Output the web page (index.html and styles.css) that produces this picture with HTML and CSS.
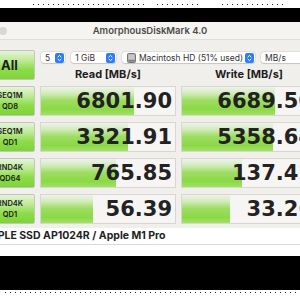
FILE: index.html
```html
<!DOCTYPE html>
<html lang="en">
<head>
    <meta charset="utf-8">
    <title>AmorphousDiskMark 4.0</title>
    <link rel="stylesheet" href="styles.css">
</head>
<body>
    <!-- top edge of the screen -->
    <div class="dots top">
        <span class="run r1"></span><span class="run r2"></span><span class="run r3"></span>
    </div>
    <div class="band"></div>

    <div class="window">
        <div class="titlebar">
            <span class="light"></span>
            <span class="title">AmorphousDiskMark 4.0</span>
        </div>

        <div class="main">
            <button class="btn all">All</button>

            <div class="toolbar">
                <div class="select s-count"><span>5</span>
                    <svg class="step" width="9" height="10" viewBox="0 0 9 10"><rect width="9" height="10" rx="2" fill="#2f7df6"/><path d="M2.7 4.1 4.5 2.4 6.3 4.1M2.7 5.9 4.5 7.6 6.3 5.9" fill="none" stroke="#fff" stroke-width="1"/></svg>
                </div>
                <div class="select s-size"><span>1 GiB</span>
                    <svg class="step" width="9" height="10" viewBox="0 0 9 10"><rect width="9" height="10" rx="2" fill="#2f7df6"/><path d="M2.7 4.1 4.5 2.4 6.3 4.1M2.7 5.9 4.5 7.6 6.3 5.9" fill="none" stroke="#fff" stroke-width="1"/></svg>
                </div>
                <div class="select s-disk">
                    <svg class="disk" width="9" height="10" viewBox="0 0 9 10"><rect x="0.5" y="0.5" width="8" height="9" rx="1" fill="#a9a9a9" stroke="#777"/><rect x="1.5" y="1.5" width="6" height="5" fill="#c8c8c8"/><path d="M1.5 7.8H7.5" stroke="#666"/></svg>
                    <span>Macintosh HD (51% used)</span>
                    <svg class="step" width="9" height="10" viewBox="0 0 9 10"><rect width="9" height="10" rx="2" fill="#2f7df6"/><path d="M2.7 4.1 4.5 2.4 6.3 4.1M2.7 5.9 4.5 7.6 6.3 5.9" fill="none" stroke="#fff" stroke-width="1"/></svg>
                </div>
                <div class="select s-unit"><span>MB/s</span></div>
            </div>

            <div class="head">Read [MB/s]</div>
            <div class="head">Write [MB/s]</div>

            <!-- SEQ1M QD8 -->
            <button class="btn label">SEQ1M<br>QD8</button>
            <div class="cell" style="--w: 69.6%">6801.90</div>
            <div class="cell" style="--w: 69.6%">6689.50</div>

            <!-- SEQ1M QD1 -->
            <button class="btn label">SEQ1M<br>QD1</button>
            <div class="cell" style="--w: 65%">3321.91</div>
            <div class="cell" style="--w: 68%">5358.64</div>

            <!-- RND4K QD64 -->
            <button class="btn label">RND4K<br>QD64</button>
            <div class="cell" style="--w: 56%">765.85</div>
            <div class="cell" style="--w: 44.8%">137.42</div>

            <!-- RND4K QD1 -->
            <button class="btn label">RND4K<br>QD1</button>
            <div class="cell" style="--w: 39%">56.39</div>
            <div class="cell" style="--w: 36%">33.26</div>
        </div>

        <div class="footer">APPLE SSD AP1024R / Apple M1 Pro</div>
    </div>

    <div class="band low"></div>
    <div class="dots bottom">
        <span class="run r4"></span>
    </div>
</body>
</html>
```

FILE: styles.css
```css
body {
    margin: 0;
    width: 300px;
    height: 300px;
    overflow: hidden;
    background: #fff;
    font-family: Inter, "Noto Sans", sans-serif;
    color: #222;
}

/* dotted menu-bar edge */
.dots {
    height: 8px;
    display: flex;
    align-items: flex-start;
}
.dots.top {
    padding-top: 4px;
    height: 4px;
}
.dots.bottom {
    height: 10px;
    padding-top: 2px;
}
.run {
    display: block;
    height: 1px;
    background: repeating-linear-gradient(to right, #222 0 1px, transparent 1px 5px);
}
.r1 { margin-left: 33px; width: 115px; }
.r2 { margin-left: 9px; width: 42px; }
.r3 { margin-left: 23px; width: 65px; }
.r4 { margin-left: 5px; width: 295px; }

.band {
    height: 14px;
    background: #000;
}
.band.low {
    height: 34px;
}

/* window */
.window {
    width: 330px;
    margin-left: -15px;
    background: #f1efec;
}

.titlebar {
    height: 17px;
    border-bottom: 1px solid #e1deda;
    background: #f6f4f1;
    display: flex;
    align-items: center;
    position: relative;
}
.light {
    width: 8px;
    height: 8px;
    margin-left: 14px;
    border-radius: 50%;
    background: #d9d7d4;
}
.title {
    position: absolute;
    left: 0;
    right: 0;
    text-align: center;
    font-size: 9.5px;
    font-weight: 600;
    color: #4b4b4b;
}

.main {
    display: grid;
    grid-template-columns: 50px 136px 136px;
    grid-template-rows: 13px 11px repeat(4, 30px);
    column-gap: 5px;
    row-gap: 6px;
    padding-top: 10px;
}

/* green buttons */
.btn {
    margin: 0;
    padding: 0 0 0 0;
    border: 1px solid #c4c4c0;
    border-radius: 2px;
    background: linear-gradient(#e6f4da 0%, #c2eb9c 30%, #8edc4b 65%, #7dd535 100%);
    color: #1c1c1c;
    font-family: Inter, "Noto Sans", sans-serif;
    text-align: center;
}
.btn.all {
    grid-row: span 2;
    padding-left: 0;
    font-size: 13px;
    font-weight: 700;
    text-indent: -1px;
}
.btn.label {
    font-size: 7.5px;
    font-weight: 600;
    line-height: 11.5px;
    padding-left: 0;
}

.toolbar {
    grid-column: 2 / 4;
    display: flex;
    gap: 6px;
    padding-left: 1px;
    padding-top: 2px;
}
.select {
    height: 11px;
    display: flex;
    align-items: center;
    background: #fff;
    border-radius: 3px;
    box-shadow: 0 0 0 0.5px rgba(0, 0, 0, 0.12), 0 0.5px 1px rgba(0, 0, 0, 0.12);
    font-size: 8.5px;
    color: #333;
}
.select span {
    flex: 1;
    padding-left: 4px;
}
.step {
    flex: none;
    margin-right: 1px;
}
.s-count { width: 26px; }
.s-size { width: 48px; }
.s-disk { width: 143px; }
.s-disk .disk {
    flex: none;
    margin-left: 5px;
}
.s-disk span { padding-left: 3px; }
.s-unit { width: 60px; }

.head {
    text-align: center;
    font-size: 11px;
    font-weight: 700;
    line-height: 11px;
    color: #1e1e1e;
}

/* result boxes with green bar */
.cell {
    border: 1px solid #d9d6d2;
    background: linear-gradient(#eef2eb 0%, #d3ecbd 22%, #9edd63 48%, #8bd945 80%, #9fe362 100%) no-repeat, #f7f5f3;
    background-size: var(--w) 100%;
    font-family: "DejaVu Sans", sans-serif;
    font-weight: 700;
    font-size: 21px;
    line-height: 28px;
    text-align: right;
    padding-right: 3px;
    color: #222;
}

.footer {
    margin-top: 4px;
    height: 16px;
    line-height: 16px;
    background: #fff;
    border-bottom: 1px solid #dcd9d5;
    padding-left: 0;
    font-size: 10.5px;
    font-weight: 700;
    color: #222;
    text-indent: -2px;
    margin-bottom: 11px;
}
```
